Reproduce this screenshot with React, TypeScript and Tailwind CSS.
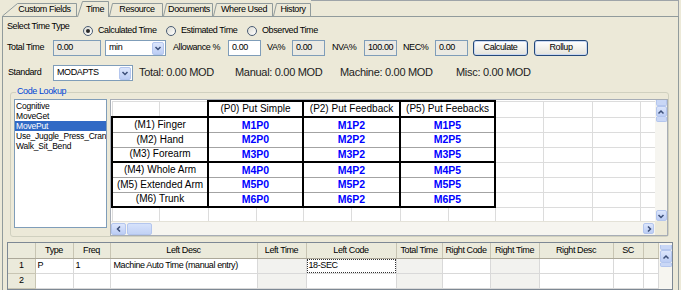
import React from 'react';

const sm = 'text-[9px] tracking-[-0.4px]';

type Dir = 'up' | 'down' | 'left' | 'right';

function Arrow({ dir }: { dir: Dir }) {
  const d = {
    up: 'M1.5 5.5 L4 3 L6.5 5.5',
    down: 'M1.5 3 L4 5.5 L6.5 3',
    left: 'M5 1.5 L2.5 4 L5 6.5',
    right: 'M3 1.5 L5.5 4 L3 6.5',
  }[dir];
  return (
    <svg width="8" height="8" viewBox="0 0 8 8">
      <path d={d} fill="none" stroke="#3C4F78" strokeWidth="1.5" />
    </svg>
  );
}

function ScrollButton({ dir, size }: { dir: Dir; size: string }) {
  return (
    <div
      className={`${size} shrink-0 flex items-center justify-center rounded-[2px] border border-[#B4C6EE] bg-linear-to-b from-[#DCE6FC] to-[#BCCDF4]`}
    >
      <Arrow dir={dir} />
    </div>
  );
}

function Tab({
  label,
  width,
  slant,
  w,
  pad,
  active,
}: {
  label: string;
  width: number;
  slant: number;
  w: string;
  pad: string;
  active?: boolean;
}) {
  const h = active ? 16 : 13;
  return (
    <div
      className={`relative shrink-0 flex items-center justify-center ${w} ${pad} ${
        active ? 'h-[16px] -mb-px z-10' : 'h-[13px]'
      }`}
    >
      <svg className="absolute left-0 top-0" width={width} height={h}>
        <path d={`M0 ${h} L${slant} 0 L${width} 0 L${width} ${h} Z`} fill="#ECE9D8" />
        <path
          d={`M0.5 ${h} L${slant + 0.5} 0.5 L${width - 0.5} 0.5 L${width - 0.5} ${h}`}
          fill="none"
          stroke="#919B9C"
        />
      </svg>
      <span className={`relative ${sm} leading-none`}>{label}</span>
    </div>
  );
}

function Radio({ label, checked, w }: { label: string; checked?: boolean; w: string }) {
  return (
    <div className={`flex items-center h-[10px] ${w}`}>
      <span className="w-[10px] h-[10px] shrink-0 rounded-full border border-[#4A5C74] bg-linear-to-br from-[#DCDBD3] to-white flex items-center justify-center">
        {checked && <span className="w-[4px] h-[4px] rounded-full bg-[#2A2A2A]" />}
      </span>
      <span className={`ml-[5px] ${sm} whitespace-nowrap`}>{label}</span>
    </div>
  );
}

function Field({ value, w, disabled }: { value: string; w: string; disabled?: boolean }) {
  return (
    <div
      className={`${w} h-[16px] shrink-0 border border-[#7F9DB9] flex items-center pl-[3px] ${sm} ${
        disabled ? 'bg-[#EBEAE3]' : 'bg-white'
      }`}
    >
      {value}
    </div>
  );
}

function Combo({ value, w }: { value: string; w: string }) {
  return (
    <div className={`${w} h-[16px] shrink-0 border border-[#7F9DB9] bg-white flex items-center pl-[3px] pr-px ${sm}`}>
      <span className="flex-1">{value}</span>
      <ScrollButton dir="down" size="w-[12px] h-[13px]" />
    </div>
  );
}

function Button({ label, w }: { label: string; w: string }) {
  return (
    <div
      className={`${w} h-[16px] shrink-0 rounded-[3px] border border-[#24497A] bg-linear-to-b from-white to-[#E4E3DB] shadow-[inset_0_0_0_1px_#CAD8F2] flex items-center justify-center ${sm}`}
    >
      {label}
    </div>
  );
}

const listItems = ['Cognitive', 'MoveGet', 'MovePut', 'Use_Juggle_Press_Crank', 'Walk_Sit_Bend'];

const moves = [
  ['(M1) Finger', '1'],
  ['(M2) Hand', '2'],
  ['(M3) Forearm', '3'],
  ['(M4) Whole Arm', '4'],
  ['(M5) Extended Arm', '5'],
  ['(M6) Trunk', '6'],
];

const light = 'p-0 border border-[#DCDCDC]';

function LookupGrid() {
  return (
    <div className="ml-[3px] w-[558px] h-[137px] border border-[#A7ADB6] bg-white flex flex-col">
      <div className="flex h-[121px]">
        <div className="w-[544px] h-[121px] overflow-hidden">
          <table className="border-collapse table-fixed w-[576px] text-center text-[10px] leading-none">
            <colgroup>
              <col className="w-[47px]" />
              <col className="w-[49px]" />
              <col className="w-[48px]" />
              <col className="w-[47px]" />
              <col className="w-[48px]" />
              <col className="w-[49px]" />
              <col className="w-[48px]" />
              <col className="w-[47px]" />
              <col className="w-[48px]" />
              <col className="w-[49px]" />
              <col className="w-[48px]" />
              <col className="w-[48px]" />
            </colgroup>
            <tbody>
              <tr className="h-[16px]">
                <td className={light} />
                <td className={light} />
                <td colSpan={2} className="p-0 border-2 border-black">(P0) Put Simple</td>
                <td colSpan={2} className="p-0 border-2 border-black">(P2) Put Feedback</td>
                <td colSpan={2} className="p-0 border-2 border-black">(P5) Put Feebacks</td>
                <td className={light} />
                <td className={light} />
                <td className={light} />
                <td className={light} />
              </tr>
              {moves.map(([name, n], i) => {
                const edge =
                  i === 0 || i === 3
                    ? 'border-t-2 border-t-black border-b border-b-[#A3A3A3]'
                    : i === 2 || i === 5
                    ? 'border-b-2 border-b-black border-t border-t-[#A3A3A3]'
                    : 'border-y border-y-[#A3A3A3]';
                const cell = `p-0 border-x-2 border-x-black ${edge}`;
                const code = `${cell} text-[10.5px] font-bold text-[#0000FF]`;
                return (
                  <tr key={name} className="h-[15px]">
                    <td colSpan={2} className={cell}>{name}</td>
                    <td colSpan={2} className={code}>{`M${n}P0`}</td>
                    <td colSpan={2} className={code}>{`M${n}P2`}</td>
                    <td colSpan={2} className={code}>{`M${n}P5`}</td>
                    <td className={light} />
                    <td className={light} />
                    <td className={light} />
                    <td className={light} />
                  </tr>
                );
              })}
              <tr className="h-[15px]">
                {Array.from({ length: 12 }).map((_, i) => (
                  <td key={i} className={light} />
                ))}
              </tr>
            </tbody>
          </table>
        </div>
        <div className="w-[12px] h-[121px] bg-[#F6F5F0] flex flex-col items-center">
          <div className="w-[11px] h-[6px] rounded-b-[2px] border border-t-0 border-[#B4C6EE] bg-[#C9D7F6]" />
          <ScrollButton dir="up" size="w-[11px] h-[11px]" />
          <div className="w-[11px] h-[5px] rounded-b-[2px] border border-t-0 border-[#B4C6EE] bg-[#C9D7F6]" />
          <div className="flex-1" />
          <ScrollButton dir="down" size="w-[11px] h-[11px]" />
        </div>
      </div>
      <div className="flex h-[14px]">
        <div className="w-[544px] h-[14px] bg-[#F6F5F0] border-t border-[#E4E2D8] flex items-center">
          <ScrollButton dir="left" size="w-[15px] h-[12px]" />
          <div className="ml-px w-[25px] h-[12px] rounded-[2px] border border-[#B4C6EE] bg-linear-to-b from-[#D6E2FB] to-[#C2D2F5]" />
          <div className="flex-1" />
          <ScrollButton dir="right" size="w-[11px] h-[11px]" />
          <div className="w-px" />
        </div>
        <div className="w-[12px] h-[14px] bg-[#ECE9D8]" />
      </div>
    </div>
  );
}

const hd = 'p-0 bg-[#EBEADB] border-r border-r-[#C8C5B3] border-b border-b-[#ACA899] font-normal text-center';
const dc = 'p-0 border-r border-b border-[#D9D9D9] text-left';
const gc = 'p-0 border-r border-b border-[#D9D9D9] bg-[#F2F2EF]';
const rh = 'p-0 bg-[#EBEADB] border-r border-b border-[#C8C5B3] text-center';

function StepGrid() {
  return (
    <div className="mt-[5px] w-[666px] h-[50px] border border-[#7D8894] bg-white flex overflow-hidden">
      <table className={`border-collapse table-fixed w-[650px] leading-none ${sm}`}>
        <colgroup>
          <col className="w-[27px]" />
          <col className="w-[38px]" />
          <col className="w-[37px]" />
          <col className="w-[147px]" />
          <col className="w-[49px]" />
          <col className="w-[90px]" />
          <col className="w-[46px]" />
          <col className="w-[48px]" />
          <col className="w-[49px]" />
          <col className="w-[74px]" />
          <col className="w-[30px]" />
          <col className="w-[15px]" />
        </colgroup>
        <tbody>
          <tr className="h-[15px]">
            <th className={hd} />
            <th className={hd}>Type</th>
            <th className={hd}>Freq</th>
            <th className={hd}>Left Desc</th>
            <th className={hd}>Left Time</th>
            <th className={hd}>Left Code</th>
            <th className={hd}>Total Time</th>
            <th className={hd}>Right Code</th>
            <th className={hd}>Right Time</th>
            <th className={hd}>Right Desc</th>
            <th className={hd}>SC</th>
            <th className={hd} />
          </tr>
          <tr className="h-[15px]">
            <td className={rh}>1</td>
            <td className={`${dc} pl-[2px]`}>P</td>
            <td className={`${dc} pl-[2px]`}>1</td>
            <td className={`${dc} pl-[3px] whitespace-nowrap`}>Machine Auto Time (manual entry)</td>
            <td className={gc} />
            <td className={dc}>
              <div className="h-[14px] border border-dotted border-[#333] flex items-center pl-[1px]">18-SEC</div>
            </td>
            <td className={gc} />
            <td className={dc} />
            <td className={gc} />
            <td className={dc} />
            <td className={dc} />
            <td className={dc} />
          </tr>
          <tr className="h-[15px]">
            <td className={rh}>2</td>
            <td className={dc} />
            <td className={dc} />
            <td className={dc} />
            <td className={gc} />
            <td className={dc} />
            <td className={gc} />
            <td className={dc} />
            <td className={gc} />
            <td className={dc} />
            <td className={dc} />
            <td className={dc} />
          </tr>
        </tbody>
      </table>
      <div className="w-[14px] shrink-0 bg-[#F6F5F0] flex flex-col items-center pt-[2px]">
        <div className="w-[12px] h-[5px] rounded-b-[2px] border border-t-0 border-[#B4C6EE] bg-[#C9D7F6]" />
        <ScrollButton dir="up" size="w-[12px] h-[13px]" />
        <div className="w-[12px] h-[4px] rounded-b-[2px] border border-t-0 border-[#B4C6EE] bg-[#C9D7F6]" />
      </div>
    </div>
  );
}

export default function App() {
  return (
    <div className="w-[681px] h-[290px] overflow-hidden bg-[#ECE9D8] text-black font-['Liberation_Sans',Arial,sans-serif]">
      <div className="ml-[2px] w-[677px] h-[17px] flex items-end border-b border-[#919B9C]">
        <Tab label="Custom Fields" width={75} slant={15} w="w-[75px]" pad="pl-[10px]" />
        <Tab label="Time" width={32} slant={5} w="w-[32px]" pad="pl-[4px]" active />
        <Tab label="Resource" width={54} slant={3} w="w-[54px]" pad="pl-[2px]" />
        <Tab label="Documents" width={50} slant={3} w="w-[50px]" pad="pl-[2px]" />
        <Tab label="Where Used" width={60} slant={3} w="w-[60px]" pad="pl-[2px]" />
        <Tab label="History" width={38} slant={3} w="w-[38px]" pad="pl-[2px]" />
        <div className="flex-1 self-stretch border-t border-r border-[#9EA4A8]" />
      </div>

      <div className="ml-[2px] w-[677px] h-[273px] border-x border-[#919B9C] pl-[4px] flex flex-col">
        <div className="flex items-start h-[22px] pt-[4px]">
          <div className={`w-[76px] leading-[11px] ${sm}`}>Select Time Type</div>
          <div className="flex mt-[5px]">
            <Radio label="Calculated Time" checked w="w-[83px]" />
            <Radio label="Estimated Time" w="w-[81px]" />
            <Radio label="Observed Time" w="w-[90px]" />
          </div>
        </div>

        <div className="flex items-center h-[16px] mt-[2px]">
          <div className={`w-[46px] ${sm}`}>Total Time</div>
          <Field value="0.00" w="w-[48px]" disabled />
          <div className="ml-[4px]">
            <Combo value="min" w="w-[61px]" />
          </div>
          <div className={`ml-[7px] w-[55px] ${sm}`}>Allowance %</div>
          <Field value="0.00" w="w-[33px]" />
          <div className={`ml-[6px] w-[25px] ${sm}`}>VA%</div>
          <Field value="0.00" w="w-[33px]" disabled />
          <div className={`ml-[7px] w-[32px] ${sm}`}>NVA%</div>
          <Field value="100.00" w="w-[33px]" disabled />
          <div className={`ml-[6px] w-[32px] ${sm}`}>NEC%</div>
          <Field value="0.00" w="w-[33px]" disabled />
          <div className="ml-[5px]">
            <Button label="Calculate" w="w-[55px]" />
          </div>
          <div className="ml-[6px]">
            <Button label="Rollup" w="w-[54px]" />
          </div>
        </div>

        <div className="flex items-center h-[16px] mt-[9px]">
          <div className={`ml-px w-[45px] ${sm}`}>Standard</div>
          <Combo value="MODAPTS" w="w-[80px]" />
          <div className="ml-[6px] flex text-[11px] tracking-[-0.3px] text-[#222] mb-[2px] whitespace-nowrap">
            <span className="w-[96px]">Total: 0.00 MOD</span>
            <span className="w-[105px]">Manual: 0.00 MOD</span>
            <span className="w-[116px]">Machine: 0.00 MOD</span>
            <span>Misc: 0.00 MOD</span>
          </div>
        </div>

        <div className="relative mt-[11px] ml-[3px] w-[659px] h-[146px] border border-[#D0D0BF] rounded-[3px] flex pl-[3px] pt-[6px]">
          <div className={`absolute left-[5px] top-[-7px] px-px bg-[#ECE9D8] text-[#0046D5] leading-[11px] ${sm}`}>
            Code Lookup
          </div>
          <div className="w-[93px] h-[129px] border border-[#7F9DB9] bg-white pt-px overflow-hidden">
            {listItems.map((it) => (
              <div
                key={it}
                className={`h-[10px] leading-[10px] pl-px whitespace-nowrap overflow-hidden text-[8.5px] tracking-[-0.2px] ${
                  it === 'MovePut' ? 'bg-[#316AC5] text-white' : ''
                }`}
              >
                {it}
              </div>
            ))}
          </div>
          <LookupGrid />
        </div>

        <StepGrid />
      </div>
    </div>
  );
}
